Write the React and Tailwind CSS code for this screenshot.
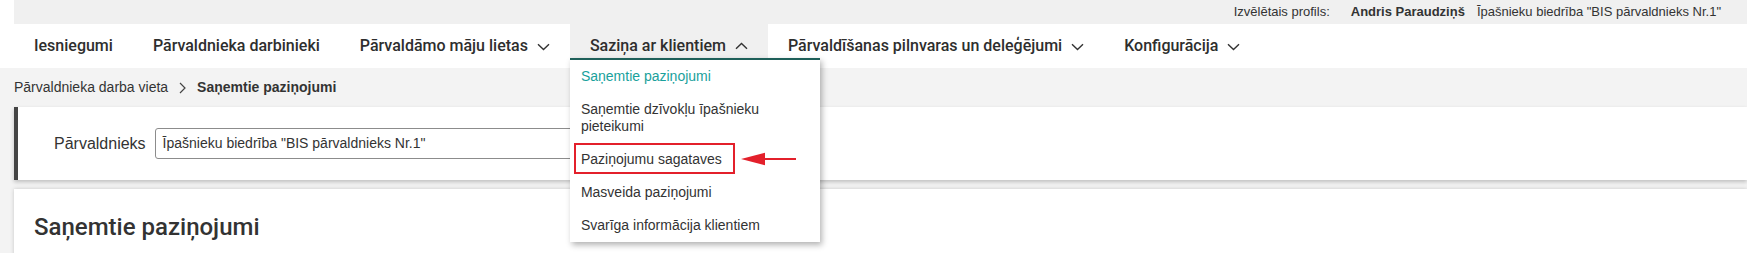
import React from "react";

function ChevronDown() {
  return (
    <svg width="13" height="8" viewBox="0 0 13 8" fill="none" className="ml-[9px] mt-[1px]">
      <path d="M1 1.2 L6.5 6.6 L12 1.2" stroke="#333" strokeWidth="1.4" />
    </svg>
  );
}

function ChevronUp() {
  return (
    <svg width="13" height="8" viewBox="0 0 13 8" fill="none" className="ml-[9px]">
      <path d="M1 6.8 L6.5 1.4 L12 6.8" stroke="#333" strokeWidth="1.4" />
    </svg>
  );
}

function NavItem({ children, chevron }) {
  return (
    <div className="flex items-center px-5 h-full whitespace-nowrap">
      <span>{children}</span>
      {chevron && <ChevronDown />}
    </div>
  );
}

export default function App() {
  return (
    <div className="min-h-screen bg-[#f3f3f3] text-[#333] font-['Liberation_Sans',Arial,sans-serif] overflow-hidden">
      {/* Header */}
      <div className="bg-white pl-[14px] relative z-20">
        <div className="h-[24px] bg-[#f0f0f0] flex items-center justify-end pr-[26px] text-[13px] text-[#333]">
          <span>Izvēlētais profils:</span>
          <span className="font-bold ml-[21px]">Andris Paraudziņš</span>
          <span className="ml-[12px]">Īpašnieku biedrība "BIS pārvaldnieks Nr.1"</span>
        </div>
        <nav className="h-[44px] bg-white flex font-['Roboto',sans-serif] font-medium text-[16px] text-[#2e2e2e]">
          <NavItem>Iesniegumi</NavItem>
          <NavItem>Pārvaldnieka darbinieki</NavItem>
          <NavItem chevron>Pārvaldāmo māju lietas</NavItem>
          <div className="relative flex items-center px-5 h-full bg-[#f0f0f0] whitespace-nowrap">
            <span>Saziņa ar klientiem</span>
            <ChevronUp />
            <div className="absolute left-0 top-[34px] w-[250px] bg-white border-t-2 border-[#1e5f59] shadow-[2px_3px_6px_rgba(0,0,0,0.3)] font-['Liberation_Sans',Arial,sans-serif] font-normal text-[14px] leading-[17px] text-[#333] whitespace-normal">
              <div className="px-[11px] py-2 text-[#1aa19c]">Saņemtie paziņojumi</div>
              <div className="px-[11px] py-2">Saņemtie dzīvokļu īpašnieku<br />pieteikumi</div>
              <div className="relative px-[11px] py-2">
                Paziņojumu sagataves
                <div className="absolute left-[4px] top-0 w-[161px] h-[31px] border-2 border-[#e3202b]"></div>
                <svg className="absolute left-[171px] top-[9px]" width="56" height="14" viewBox="0 0 56 14">
                  <path d="M0 7 L24 0.8 L24 13.2 Z" fill="#e3202b" />
                  <rect x="20" y="6" width="35" height="2" fill="#e3202b" />
                </svg>
              </div>
              <div className="px-[11px] py-2">Masveida paziņojumi</div>
              <div className="px-[11px] py-2">Svarīga informācija klientiem</div>
            </div>
          </div>
          <NavItem chevron>Pārvaldīšanas pilnvaras un deleģējumi</NavItem>
          <NavItem chevron>Konfigurācija</NavItem>
        </nav>
      </div>

      {/* Breadcrumb */}
      <div className="h-[39px] pl-[14px] flex items-center text-[14px] text-[#333]">
        <span>Pārvaldnieka darba vieta</span>
        <svg className="mx-[11px]" width="7" height="12" viewBox="0 0 7 12" fill="none">
          <path d="M1 1 L6 6 L1 11" stroke="#444" strokeWidth="1.2" />
        </svg>
        <span className="font-bold">Saņemtie paziņojumi</span>
      </div>

      {/* Filter card */}
      <div className="ml-[14px] h-[73px] bg-white border-l-4 border-[#444] flex items-center shadow-[0_2px_4px_rgba(0,0,0,0.22)]">
        <span className="pl-[36px] text-[16px] text-[#333]">Pārvaldnieks</span>
        <div className="ml-[9px] w-[560px] h-[31px] border border-[#8c8c8c] rounded-[3px] flex items-center pl-[7px] text-[14px] text-[#333]">
          Īpašnieku biedrība "BIS pārvaldnieks Nr.1"
        </div>
      </div>

      {/* Main card */}
      <div className="ml-[14px] mt-[9px] bg-white shadow-[0_0_4px_rgba(0,0,0,0.18)] pt-[24px] pl-[20px] h-[120px]">
        <h1 className="font-['Roboto',sans-serif] font-medium text-[24px] leading-[28px] text-[#333]">Saņemtie paziņojumi</h1>
      </div>
    </div>
  );
}
